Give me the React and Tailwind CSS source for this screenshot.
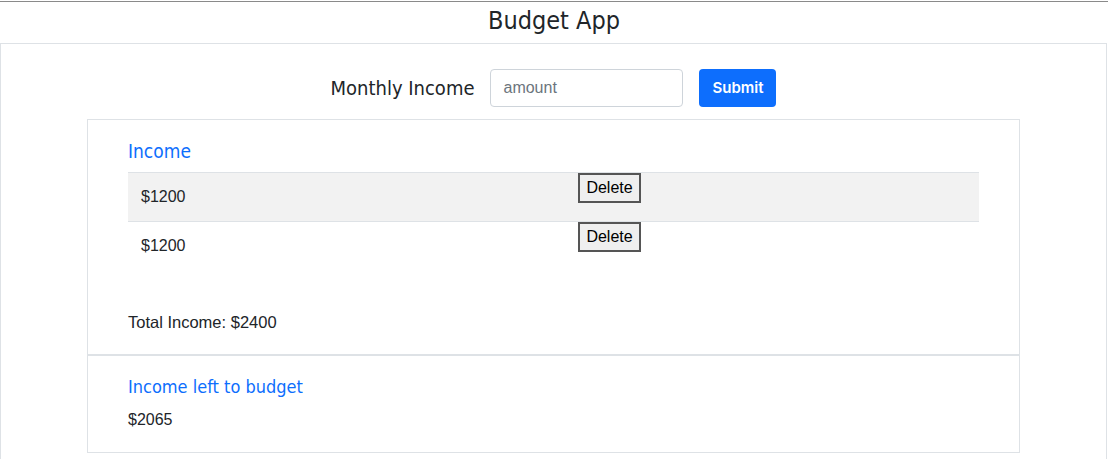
import React, { useState } from 'react';

const headFont = { fontFamily: '"DejaVu Sans Condensed", "DejaVu Sans", sans-serif' };

function IncomeRow({ amount, shaded, onDelete }) {
  return (
    <div
      className={`flex h-[49px] border-t border-[#dee2e6] ${shaded ? 'bg-[#f2f2f2]' : ''}`}
    >
      <div className="w-[450px] flex items-center pl-[13px] text-base text-[#212529]">
        ${amount}
      </div>
      <div>
        <button
          onClick={onDelete}
          className="h-[30px] w-[63px] bg-[#efefef] border-2 border-[#555] text-base leading-none text-black"
        >
          Delete
        </button>
      </div>
    </div>
  );
}

export default function App() {
  const [incomes, setIncomes] = useState([1200, 1200]);
  const total = incomes.reduce((a, b) => a + b, 0);

  return (
    <div className="min-h-screen bg-white" style={{ fontFamily: '"Liberation Sans", Arial, sans-serif' }}>
      <div className="pt-px">
        <div className="h-px bg-[#8a8a8a]" />
      </div>

      {/* Header */}
      <h1
        className="h-[41px] flex items-center justify-center text-[25px] text-[#212529] pb-1"
        style={headFont}
      >
        Budget App
      </h1>

      <div className="border border-[#dee2e6] mr-px pb-10">
        {/* Income form */}
        <div className="flex items-center justify-center pt-[25px] pb-3">
          <label className="text-[20px] text-[#212529] mr-4" style={headFont}>
            Monthly Income
          </label>
          <input
            placeholder="amount"
            className="h-[38px] w-[193px] border border-[#ced4da] rounded px-3 text-base placeholder:text-[#6c757d] mr-4"
          />
          <button
            className="h-[38px] w-[77px] bg-[#0d6efd] text-white rounded text-[15px] font-semibold"
            style={{ fontFamily: 'Inter, sans-serif' }}
          >
            Submit
          </button>
        </div>

        <div className="mx-[86px] border border-[#dee2e6]">
          {/* Income list */}
          <div className="px-10 pt-[19px] pb-5">
            <h2 className="text-[19px] leading-6 text-[#0d6efd] mb-[9px]" style={headFont}>
              Income
            </h2>
            <div>
              {incomes.map((amt, i) => (
                <IncomeRow
                  key={i}
                  amount={amt}
                  shaded={i % 2 === 0}
                  onDelete={() => setIncomes(incomes.filter((_, j) => j !== i))}
                />
              ))}
            </div>
            <p className="mt-10 text-[16.5px] leading-6 text-[#212529]">Total Income: ${total}</p>
          </div>

          <div className="h-[2px] bg-[#dee2e6]" />

          {/* Remaining */}
          <div className="px-10 pt-[19px] pb-5">
            <h2 className="text-[18px] leading-6 text-[#0d6efd] mb-[9px]" style={headFont}>
              Income left to budget
            </h2>
            <p className="text-base leading-6 text-[#212529]">${total - 335}</p>
          </div>
        </div>
      </div>
    </div>
  );
}
